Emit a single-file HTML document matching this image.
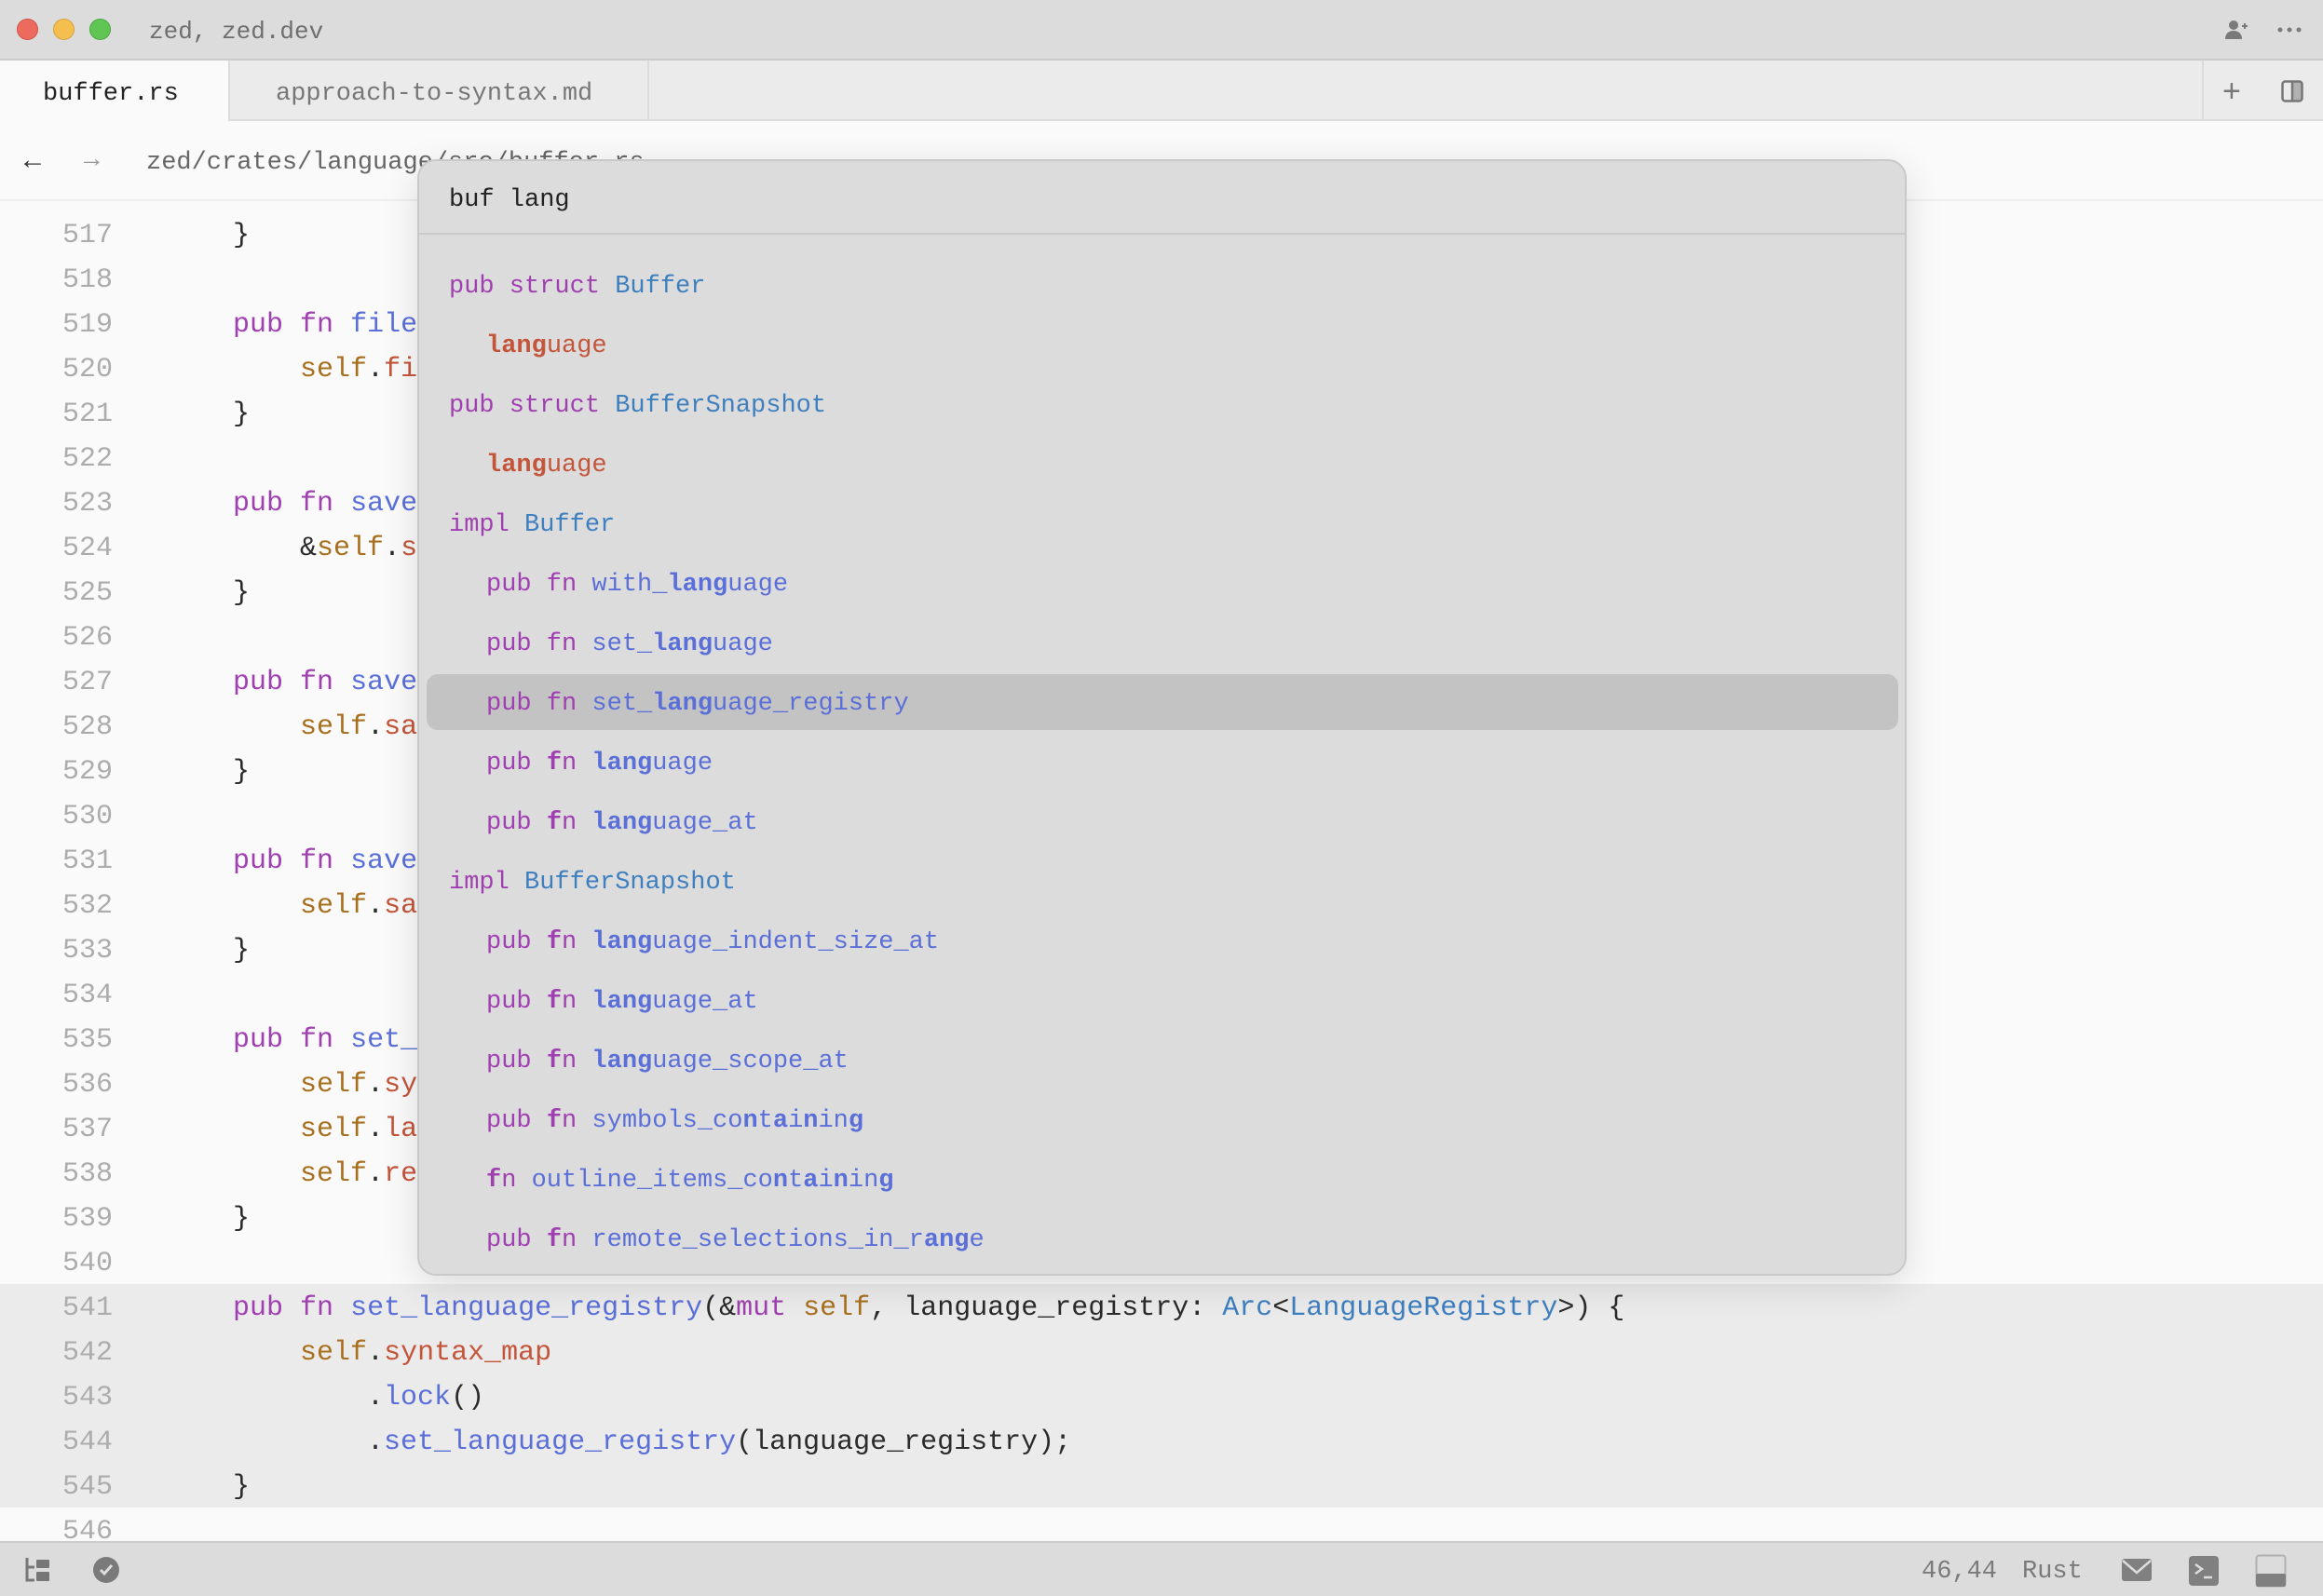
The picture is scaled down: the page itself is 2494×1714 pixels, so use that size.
<!DOCTYPE html>
<html><head><meta charset="utf-8"><style>
*{margin:0;padding:0;box-sizing:border-box}
body{width:2494px;height:1714px;overflow:hidden;background:#fafafa;font-family:"Liberation Mono",monospace;color:#2b2b2b;position:relative}
.abs{position:absolute}
.title{left:0;top:0;width:2494px;height:65px;background:#dcdcdc;border-bottom:2px solid #cbcbcb}
.dot{position:absolute;top:20px;width:23px;height:23px;border-radius:50%}
.tabs{left:0;top:65px;width:2494px;height:65px;background:#ebebeb;border-bottom:2px solid #dcdcdc}
.t{font-size:27px;white-space:pre;line-height:1}
.line{position:absolute;left:0;height:48px;line-height:48px;font-size:30px;white-space:pre;width:2494px;margin-top:3px}
.ln{position:absolute;right:2373px;color:#acacac;text-align:right}
.code{position:absolute;left:178px}
.k{color:#a03fb0}.f{color:#5b6fd8}.ty{color:#3e7fc0}.s{color:#a8701e}.r{color:#c4553a}
.pal{left:448px;top:171px;width:1599px;height:1199px;background:#dcdcdc;border:2px solid #c9c9c9;border-radius:20px;box-shadow:0 10px 40px rgba(0,0,0,.12)}
.it{position:absolute;height:64px;line-height:64px;font-size:27px;white-space:pre;margin-top:3px}
.it b{font-weight:bold}
.status{left:0;top:1655px;width:2494px;height:59px;background:#dcdcdc;border-top:2px solid #cbcbcb}
</style></head><body>
<div class="abs title">
<div class="dot" style="left:18px;background:#ed6a5e;border:1px solid #d35347"></div>
<div class="dot" style="left:57px;background:#f5bf4f;border:1px solid #d6a33d"></div>
<div class="dot" style="left:96px;background:#61c554;border:1px solid #4aa93f"></div>
<div class="abs t" style="left:160px;top:21px;font-size:26px;color:#6e6e6e">zed, zed.dev</div>
<svg class="abs" style="left:2388px;top:20px" width="26" height="24" viewBox="0 0 26 24"><circle cx="10" cy="7" r="5" fill="#7a7a7a"/><path d="M1 22c0-6 4-9 9-9s9 3 9 9z" fill="#7a7a7a"/><path d="M19 8h6M22 5v6" stroke="#7a7a7a" stroke-width="2"/></svg>
<svg class="abs" style="left:2444px;top:28px" width="28" height="8"><circle cx="4" cy="4" r="2.5" fill="#7a7a7a"/><circle cx="14" cy="4" r="2.5" fill="#7a7a7a"/><circle cx="24" cy="4" r="2.5" fill="#7a7a7a"/></svg>
</div>
<div class="abs tabs">
<div class="abs" style="left:0;top:0;width:247px;height:65px;background:#fafafa;border-right:2px solid #dcdcdc"></div>
<div class="abs" style="left:247px;top:0;width:450px;height:65px;border-right:2px solid #dcdcdc"></div>
<div class="abs t" style="left:46px;top:23px;color:#222">buffer.rs</div>
<div class="abs t" style="left:296px;top:23px;color:#777">approach-to-syntax.md</div>
<div class="abs" style="left:2364px;top:0;width:2px;height:65px;background:#dcdcdc"></div>
<div class="abs" style="left:2386px;top:14px;font-size:34px;color:#777;font-family:'Liberation Sans'">+</div>
<svg class="abs" style="left:2449px;top:21px" width="24" height="24"><rect x="1.5" y="1.5" width="21" height="21" rx="3" fill="none" stroke="#777" stroke-width="2.5"/><path d="M12 2v20" stroke="#777" stroke-width="2.5"/><rect x="12" y="2" width="10" height="20" fill="#777" opacity=".5"/></svg>
</div>
<div class="abs t" style="left:26px;top:159px;font-size:30px;color:#333">←</div>
<div class="abs t" style="left:90px;top:159px;font-size:28px;color:#999">→</div>
<div class="abs t" style="left:157px;top:162px;color:#666">zed/crates/language/src/buffer.rs</div>
<div class="abs" style="left:0;top:214px;width:2494px;height:2px;background:#eeeeee"></div>
<div class="abs" style="left:0;top:1379px;width:2494px;height:240px;background:#ebebeb"></div>

<div class="line" style="top:226px"><span class="ln">517</span><span class="code">    }</span></div>
<div class="line" style="top:274px"><span class="ln">518</span></div>
<div class="line" style="top:322px"><span class="ln">519</span><span class="code">    <span class="k">pub fn</span> <span class="f">file</span>(&amp;<span class="s">self</span>) -&gt; Option&lt;&amp;Arc&lt;dyn File&gt;&gt; {</span></div>
<div class="line" style="top:370px"><span class="ln">520</span><span class="code">        <span class="s">self</span>.<span class="r">file</span>.as_ref()</span></div>
<div class="line" style="top:418px"><span class="ln">521</span><span class="code">    }</span></div>
<div class="line" style="top:466px"><span class="ln">522</span></div>
<div class="line" style="top:514px"><span class="ln">523</span><span class="code">    <span class="k">pub fn</span> <span class="f">saved_version</span>(&amp;<span class="s">self</span>) -&gt; &amp;clock::Global {</span></div>
<div class="line" style="top:562px"><span class="ln">524</span><span class="code">        &amp;<span class="s">self</span>.<span class="r">saved_version</span></span></div>
<div class="line" style="top:610px"><span class="ln">525</span><span class="code">    }</span></div>
<div class="line" style="top:658px"><span class="ln">526</span></div>
<div class="line" style="top:706px"><span class="ln">527</span><span class="code">    <span class="k">pub fn</span> <span class="f">saved_version_fingerprint</span>(&amp;<span class="s">self</span>) -&gt; String {</span></div>
<div class="line" style="top:754px"><span class="ln">528</span><span class="code">        <span class="s">self</span>.<span class="r">saved_version_fingerprint</span>.clone()</span></div>
<div class="line" style="top:802px"><span class="ln">529</span><span class="code">    }</span></div>
<div class="line" style="top:850px"><span class="ln">530</span></div>
<div class="line" style="top:898px"><span class="ln">531</span><span class="code">    <span class="k">pub fn</span> <span class="f">saved_mtime</span>(&amp;<span class="s">self</span>) -&gt; SystemTime {</span></div>
<div class="line" style="top:946px"><span class="ln">532</span><span class="code">        <span class="s">self</span>.<span class="r">saved_mtime</span></span></div>
<div class="line" style="top:994px"><span class="ln">533</span><span class="code">    }</span></div>
<div class="line" style="top:1042px"><span class="ln">534</span></div>
<div class="line" style="top:1090px"><span class="ln">535</span><span class="code">    <span class="k">pub fn</span> <span class="f">set_language</span>(&amp;<span class="k">mut</span> <span class="s">self</span>, language: Option&lt;Arc&lt;Language&gt;&gt;) {</span></div>
<div class="line" style="top:1138px"><span class="ln">536</span><span class="code">        <span class="s">self</span>.<span class="r">syntax_map</span>.lock().clear();</span></div>
<div class="line" style="top:1186px"><span class="ln">537</span><span class="code">        <span class="s">self</span>.<span class="r">language</span> = language;</span></div>
<div class="line" style="top:1234px"><span class="ln">538</span><span class="code">        <span class="s">self</span>.<span class="r">reparse</span>();</span></div>
<div class="line" style="top:1282px"><span class="ln">539</span><span class="code">    }</span></div>
<div class="line" style="top:1330px"><span class="ln">540</span></div>
<div class="line" style="top:1378px"><span class="ln">541</span><span class="code">    <span class="k">pub fn</span> <span class="f">set_language_registry</span>(&amp;<span class="k">mut</span> <span class="s">self</span>, language_registry: <span class="ty">Arc</span>&lt;<span class="ty">LanguageRegistry</span>&gt;) {</span></div>
<div class="line" style="top:1426px"><span class="ln">542</span><span class="code">        <span class="s">self</span>.<span class="r">syntax_map</span></span></div>
<div class="line" style="top:1474px"><span class="ln">543</span><span class="code">            .<span class="f">lock</span>()</span></div>
<div class="line" style="top:1522px"><span class="ln">544</span><span class="code">            .<span class="f">set_language_registry</span>(language_registry);</span></div>
<div class="line" style="top:1570px"><span class="ln">545</span><span class="code">    }</span></div>
<div class="line" style="top:1618px"><span class="ln">546</span></div>

<div class="abs pal">
<div class="abs t" style="left:32px;top:29px;color:#222">buf lang</div>
<div class="abs" style="left:0;top:77px;width:1595px;height:2px;background:#c9c9c9"></div>
<div class="abs" style="left:8px;top:551px;width:1580px;height:60px;background:#c3c3c3;border-radius:12px"></div>
<div class="it" style="left:32px;top:100px"><span class="k">pub struct</span> <span class="ty">Buffer</span></div>
<div class="it" style="left:72px;top:164px"><span class="r"><b>lang</b>uage</span></div>
<div class="it" style="left:32px;top:228px"><span class="k">pub struct</span> <span class="ty">BufferSnapshot</span></div>
<div class="it" style="left:72px;top:292px"><span class="r"><b>lang</b>uage</span></div>
<div class="it" style="left:32px;top:356px"><span class="k">impl</span> <span class="ty">Buffer</span></div>
<div class="it" style="left:72px;top:420px"><span class="k">pub fn</span> <span class="f">with_<b>lang</b>uage</span></div>
<div class="it" style="left:72px;top:484px"><span class="k">pub fn</span> <span class="f">set_<b>lang</b>uage</span></div>
<div class="it" style="left:72px;top:548px"><span class="k">pub fn</span> <span class="f">set_<b>lang</b>uage_registry</span></div>
<div class="it" style="left:72px;top:612px"><span class="k">pub <b>f</b>n</span> <span class="f"><b>lang</b>uage</span></div>
<div class="it" style="left:72px;top:676px"><span class="k">pub <b>f</b>n</span> <span class="f"><b>lang</b>uage_at</span></div>
<div class="it" style="left:32px;top:740px"><span class="k">impl</span> <span class="ty">BufferSnapshot</span></div>
<div class="it" style="left:72px;top:804px"><span class="k">pub <b>f</b>n</span> <span class="f"><b>lang</b>uage_indent_size_at</span></div>
<div class="it" style="left:72px;top:868px"><span class="k">pub <b>f</b>n</span> <span class="f"><b>lang</b>uage_at</span></div>
<div class="it" style="left:72px;top:932px"><span class="k">pub <b>f</b>n</span> <span class="f"><b>lang</b>uage_scope_at</span></div>
<div class="it" style="left:72px;top:996px"><span class="k">pub <b>f</b>n</span> <span class="f">symbols_co<b>n</b>t<b>a</b>i<b>n</b>in<b>g</b></span></div>
<div class="it" style="left:72px;top:1060px"><span class="k"><b>f</b>n</span> <span class="f">outline_items_co<b>n</b>t<b>a</b>i<b>n</b>in<b>g</b></span></div>
<div class="it" style="left:72px;top:1124px"><span class="k">pub <b>f</b>n</span> <span class="f">remote_selections_in_r<b>ang</b>e</span></div>
</div>

<div class="abs status">
<svg class="abs" style="left:26px;top:14px" width="30" height="30"><path d="M3 2v24h8M3 12h8" stroke="#777" stroke-width="3" fill="none"/><rect x="13" y="4" width="14" height="9" rx="1" fill="#777"/><rect x="13" y="17" width="14" height="10" rx="1" fill="#777"/></svg>
<svg class="abs" style="left:99px;top:14px" width="30" height="30"><circle cx="15" cy="15" r="14" fill="#7a7a7a"/><path d="M9 15l4 4 8-9" stroke="#ddd" stroke-width="3" fill="none"/></svg>
<div class="abs t" style="left:2063px;top:18px;color:#7a7a7a">46,44</div>
<div class="abs t" style="left:2171px;top:18px;color:#7a7a7a">Rust</div>
<svg class="abs" style="left:2278px;top:16px" width="32" height="26"><rect x="0" y="1" width="32" height="24" rx="3" fill="#808080"/><path d="M1 3l15 13 15-13" stroke="#dcdcdc" stroke-width="2.5" fill="none"/></svg>
<svg class="abs" style="left:2350px;top:14px" width="32" height="32"><rect width="32" height="32" rx="4" fill="#808080"/><path d="M7 9l7 5-7 5M16 23h9" stroke="#dcdcdc" stroke-width="2.5" fill="none"/></svg>
<svg class="abs" style="left:2421px;top:12px" width="34" height="36"><rect x="1.5" y="1.5" width="31" height="33" rx="3" fill="none" stroke="#b0b0b0" stroke-width="2"/><rect x="1" y="21" width="32" height="14" rx="2" fill="#808080"/></svg>
</div>
</body></html>
